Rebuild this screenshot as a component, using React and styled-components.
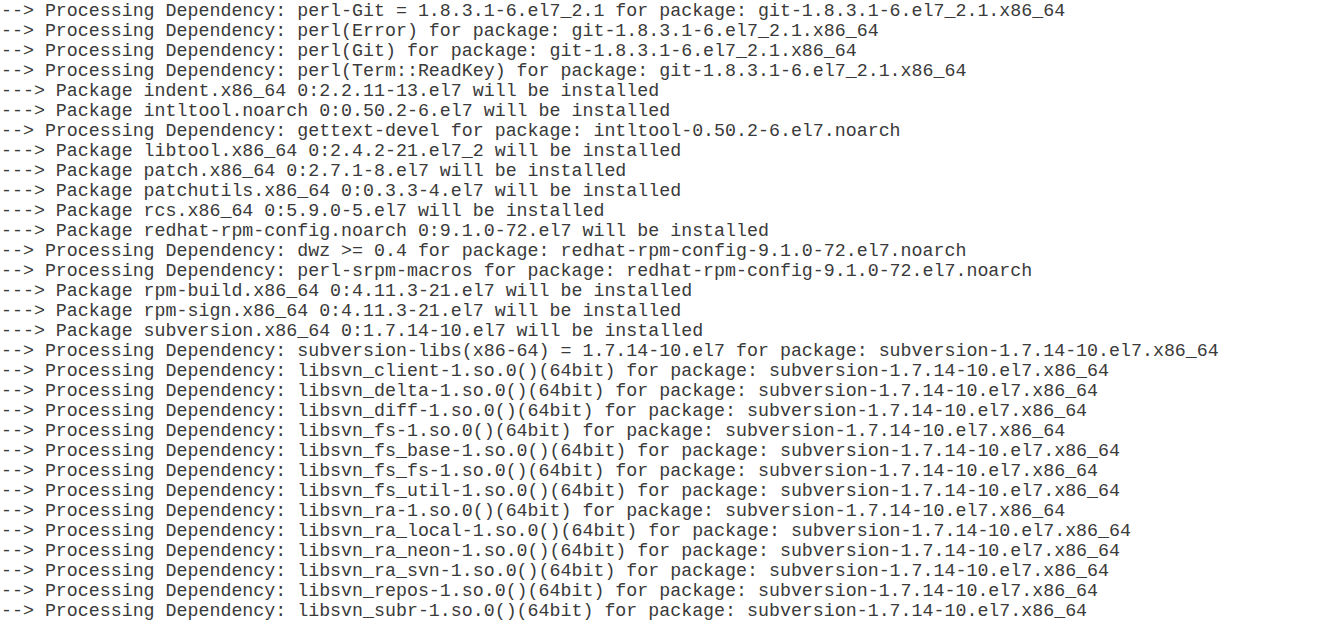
import React from 'react'
import styled, { createGlobalStyle } from 'styled-components'

const GlobalStyle = createGlobalStyle`
  html, body {
    margin: 0;
    padding: 0;
    background: #fff;
  }
`

const Terminal = styled.div`
  width: 1343px;
  height: 632px;
  overflow: hidden;
  background-color: #fff;
  padding: 1px 0 0 1px;
  box-sizing: border-box;
  font-family: "Liberation Mono", "Courier New", monospace;
  font-size: 18.3px;
  color: #3a3a3a;
`

const Line = styled.div`
  height: 20px;
  line-height: 20px;
  white-space: pre;
`

const dep = 'subversion-1.7.14-10.el7.x86_64'

const lines = [
  '--> Processing Dependency: perl-Git = 1.8.3.1-6.el7_2.1 for package: git-1.8.3.1-6.el7_2.1.x86_64',
  '--> Processing Dependency: perl(Error) for package: git-1.8.3.1-6.el7_2.1.x86_64',
  '--> Processing Dependency: perl(Git) for package: git-1.8.3.1-6.el7_2.1.x86_64',
  '--> Processing Dependency: perl(Term::ReadKey) for package: git-1.8.3.1-6.el7_2.1.x86_64',
  '---> Package indent.x86_64 0:2.2.11-13.el7 will be installed',
  '---> Package intltool.noarch 0:0.50.2-6.el7 will be installed',
  '--> Processing Dependency: gettext-devel for package: intltool-0.50.2-6.el7.noarch',
  '---> Package libtool.x86_64 0:2.4.2-21.el7_2 will be installed',
  '---> Package patch.x86_64 0:2.7.1-8.el7 will be installed',
  '---> Package patchutils.x86_64 0:0.3.3-4.el7 will be installed',
  '---> Package rcs.x86_64 0:5.9.0-5.el7 will be installed',
  '---> Package redhat-rpm-config.noarch 0:9.1.0-72.el7 will be installed',
  '--> Processing Dependency: dwz >= 0.4 for package: redhat-rpm-config-9.1.0-72.el7.noarch',
  '--> Processing Dependency: perl-srpm-macros for package: redhat-rpm-config-9.1.0-72.el7.noarch',
  '---> Package rpm-build.x86_64 0:4.11.3-21.el7 will be installed',
  '---> Package rpm-sign.x86_64 0:4.11.3-21.el7 will be installed',
  '---> Package subversion.x86_64 0:1.7.14-10.el7 will be installed',
  `--> Processing Dependency: subversion-libs(x86-64) = 1.7.14-10.el7 for package: ${dep}`,
  ...[
    'libsvn_client-1.so.0()(64bit)',
    'libsvn_delta-1.so.0()(64bit)',
    'libsvn_diff-1.so.0()(64bit)',
    'libsvn_fs-1.so.0()(64bit)',
    'libsvn_fs_base-1.so.0()(64bit)',
    'libsvn_fs_fs-1.so.0()(64bit)',
    'libsvn_fs_util-1.so.0()(64bit)',
    'libsvn_ra-1.so.0()(64bit)',
    'libsvn_ra_local-1.so.0()(64bit)',
    'libsvn_ra_neon-1.so.0()(64bit)',
    'libsvn_ra_svn-1.so.0()(64bit)',
    'libsvn_repos-1.so.0()(64bit)',
    'libsvn_subr-1.so.0()(64bit)',
  ].map(lib => `--> Processing Dependency: ${lib} for package: ${dep}`),
]

const App = () => (
  <>
    <GlobalStyle />
    <Terminal>
      {lines.map((text, i) => (
        <Line key={i}>{text}</Line>
      ))}
    </Terminal>
  </>
)

export default App
